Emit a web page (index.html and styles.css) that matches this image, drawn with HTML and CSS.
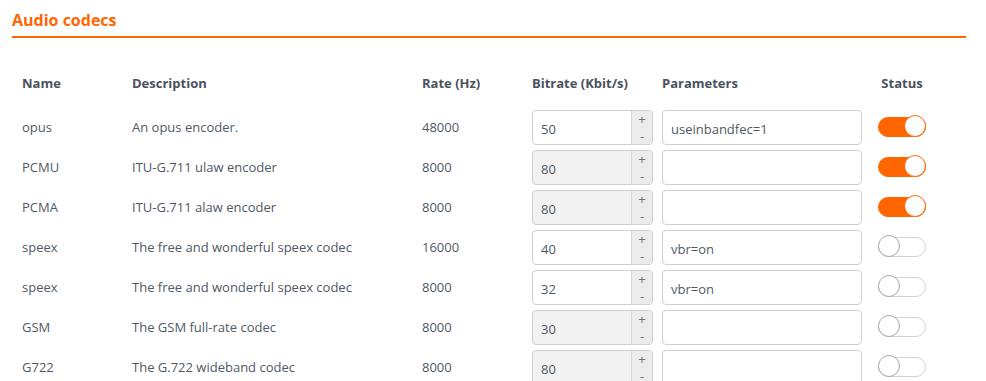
FILE: index.html
```html
<!DOCTYPE html>
<html lang="en">
<head>
    <meta charset="UTF-8">
    <meta name="viewport" content="width=device-width, initial-scale=1.0">
    <title>Audio codecs</title>
    <link rel="stylesheet" href="styles.css">
</head>
<body>

    <div class="panel">
        <h2 class="panel-title">Audio codecs</h2>

        <div class="codec-table">
            <div class="row head">
                <div>Name</div>
                <div>Description</div>
                <div>Rate (Hz)</div>
                <div>Bitrate (Kbit/s)</div>
                <div>Parameters</div>
                <div class="status-head">Status</div>
            </div>

            <div class="row">
                <div>opus</div>
                <div>An opus encoder.</div>
                <div>48000</div>
                <div class="spin"><span class="spin-value">50</span><span class="spin-btns"><span>+</span><span>-</span></span></div>
                <div class="param">useinbandfec=1</div>
                <div class="toggle on"><span class="knob"></span></div>
            </div>

            <div class="row">
                <div>PCMU</div>
                <div>ITU-G.711 ulaw encoder</div>
                <div>8000</div>
                <div class="spin disabled"><span class="spin-value">80</span><span class="spin-btns"><span>+</span><span>-</span></span></div>
                <div class="param"></div>
                <div class="toggle on"><span class="knob"></span></div>
            </div>

            <div class="row">
                <div>PCMA</div>
                <div>ITU-G.711 alaw encoder</div>
                <div>8000</div>
                <div class="spin disabled"><span class="spin-value">80</span><span class="spin-btns"><span>+</span><span>-</span></span></div>
                <div class="param"></div>
                <div class="toggle on"><span class="knob"></span></div>
            </div>

            <div class="row">
                <div>speex</div>
                <div>The free and wonderful speex codec</div>
                <div>16000</div>
                <div class="spin"><span class="spin-value">40</span><span class="spin-btns"><span>+</span><span>-</span></span></div>
                <div class="param">vbr=on</div>
                <div class="toggle"><span class="knob"></span></div>
            </div>

            <div class="row">
                <div>speex</div>
                <div>The free and wonderful speex codec</div>
                <div>8000</div>
                <div class="spin"><span class="spin-value">32</span><span class="spin-btns"><span>+</span><span>-</span></span></div>
                <div class="param">vbr=on</div>
                <div class="toggle"><span class="knob"></span></div>
            </div>

            <div class="row">
                <div>GSM</div>
                <div>The GSM full-rate codec</div>
                <div>8000</div>
                <div class="spin disabled"><span class="spin-value">30</span><span class="spin-btns"><span>+</span><span>-</span></span></div>
                <div class="param"></div>
                <div class="toggle"><span class="knob"></span></div>
            </div>

            <div class="row">
                <div>G722</div>
                <div>The G.722 wideband codec</div>
                <div>8000</div>
                <div class="spin disabled"><span class="spin-value">80</span><span class="spin-btns"><span>+</span><span>-</span></span></div>
                <div class="param"></div>
                <div class="toggle"><span class="knob"></span></div>
            </div>
        </div>
    </div>

</body>
</html>
```

FILE: styles.css
```css
body {
    font-family: "Open Sans", sans-serif;
    margin: 0;
    background-color: #fff;
    color: #505966;
    font-size: 13px;
    overflow: hidden;
}

.panel {
    padding: 10px 20px 0 12px;
}

.panel-title {
    margin: 0;
    font-size: 16px;
    line-height: 20px;
    font-weight: 700;
    color: #ff6600;
    padding-bottom: 6px;
    border-bottom: 2px solid #ff6600;
}

.codec-table {
    margin-top: 25px;
    padding-left: 10px;
}

.row {
    display: grid;
    grid-template-columns: 110px 290px 110px 130px 216px 48px;
    align-items: center;
    height: 40px;
}

.row.head {
    font-weight: 700;
    color: #4a5260;
    margin-bottom: 4px;
}

.status-head {
    text-align: center;
}

.spin {
    display: flex;
    width: 119px;
    height: 33px;
    border: 1px solid #cfcfcf;
    border-radius: 4px;
    overflow: hidden;
    background-color: #fff;
}

.spin.disabled {
    background-color: #f2f2f2;
}

.spin-value {
    flex: 1;
    display: flex;
    align-items: center;
    padding: 3px 0 0 8px;
}

.spin-btns {
    width: 20px;
    display: flex;
    flex-direction: column;
    justify-content: space-between;
    align-items: center;
    background-color: #ececec;
    border-left: 1px solid #d6d6d6;
    color: #707070;
    font-size: 13px;
    line-height: 15px;
    padding: 1px 0 0;
}

.param {
    width: 190px;
    height: 30px;
    border: 1px solid #cfcfcf;
    border-radius: 4px;
    padding: 3px 0 0 8px;
    box-sizing: content-box;
    display: flex;
    align-items: center;
}

.toggle {
    position: relative;
    width: 46px;
    height: 18px;
    border: 1px solid #d2d2d2;
    border-radius: 10px;
    background-color: #fff;
}

.toggle .knob {
    position: absolute;
    top: -3px;
    left: -1px;
    width: 20px;
    height: 20px;
    border: 1px solid #a8a8a8;
    border-radius: 50%;
    background-color: #fff;
}

.toggle.on {
    background-color: #ff6600;
    border-color: #ff6600;
}

.toggle.on .knob {
    left: auto;
    right: -1px;
    border-color: #ff6600;
}
```
